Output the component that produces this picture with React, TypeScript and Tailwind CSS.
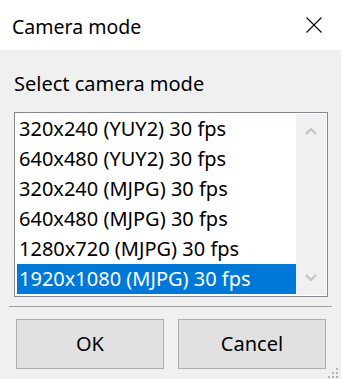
import React from 'react';

export default function App() {
    const modes = [
        "320x240 (YUY2) 30 fps",
        "640x480 (YUY2) 30 fps",
        "320x240 (MJPG) 30 fps",
        "640x480 (MJPG) 30 fps",
        "1280x720 (MJPG) 30 fps",
        "1920x1080 (MJPG) 30 fps",
    ];
    const selected = 5;

    return (
        <div
            className="relative w-[341px] h-[379px] bg-[#f0f0f0] flex flex-col text-black overflow-hidden"
            style={{ fontFamily: '"Noto Sans", "Open Sans", sans-serif' }}
        >
            {/* Title bar */}
            <div className="h-[50px] bg-white flex items-center justify-between pl-[12px] pr-[19px]">
                <span className="text-[19.5px] leading-none pt-[3px]">Camera mode</span>
                <svg width="16" height="16" viewBox="0 0 16 16" className="text-black">
                    <path d="M0.5 0.5 L15.5 15.5 M15.5 0.5 L0.5 15.5" stroke="currentColor" strokeWidth="1.1" fill="none" />
                </svg>
            </div>

            {/* Label */}
            <div className="pl-[14px] pt-[22px] h-[62px] text-[20px] leading-[24px]">Select camera mode</div>

            {/* List box */}
            <div className="mx-[14px] w-[314px] h-[185px] border border-[#828790] bg-white p-px flex">
                <div className="flex-1 flex flex-col pl-px">
                    {modes.map((m, i) => (
                        <div
                            key={i}
                            className={
                                i === selected
                                    ? "h-[30px] flex items-center pl-[2px] text-[20px] bg-[#0078d7] text-white"
                                    : "h-[30px] flex items-center pl-[2px] text-[20px]"
                            }
                        >
                            {m}
                        </div>
                    ))}
                </div>
                <div className="w-[30px] bg-[#f0f0f0] flex flex-col justify-between items-center py-[13px]">
                    <svg width="12" height="8" viewBox="0 0 12 8">
                        <path d="M1 7 L6 2 L11 7" stroke="#c2c2c2" strokeWidth="2" fill="none" />
                    </svg>
                    <svg width="12" height="8" viewBox="0 0 12 8">
                        <path d="M1 1 L6 6 L11 1" stroke="#c2c2c2" strokeWidth="2" fill="none" />
                    </svg>
                </div>
            </div>

            {/* Separator */}
            <div className="mx-[9px] mt-[9px] h-px bg-[#a0a0a0]"></div>

            {/* Buttons */}
            <div className="flex gap-[14px] pl-[16px] pt-[12px]">
                <button className="w-[148px] h-[50px] bg-[#e1e1e1] border border-[#adadad] text-[20px]">OK</button>
                <button className="w-[148px] h-[50px] bg-[#e1e1e1] border border-[#adadad] text-[20px]">Cancel</button>
            </div>

            {/* Resize grip */}
            <div className="absolute right-[3px] bottom-[1px] grid grid-cols-3 gap-[2px]">
                <span className="w-[2px] h-[2px]"></span>
                <span className="w-[2px] h-[2px]"></span>
                <span className="w-[2px] h-[2px] bg-[#b4b4b4]"></span>
                <span className="w-[2px] h-[2px]"></span>
                <span className="w-[2px] h-[2px] bg-[#b4b4b4]"></span>
                <span className="w-[2px] h-[2px] bg-[#b4b4b4]"></span>
                <span className="w-[2px] h-[2px] bg-[#b4b4b4]"></span>
                <span className="w-[2px] h-[2px] bg-[#b4b4b4]"></span>
                <span className="w-[2px] h-[2px] bg-[#b4b4b4]"></span>
            </div>
        </div>
    );
}
